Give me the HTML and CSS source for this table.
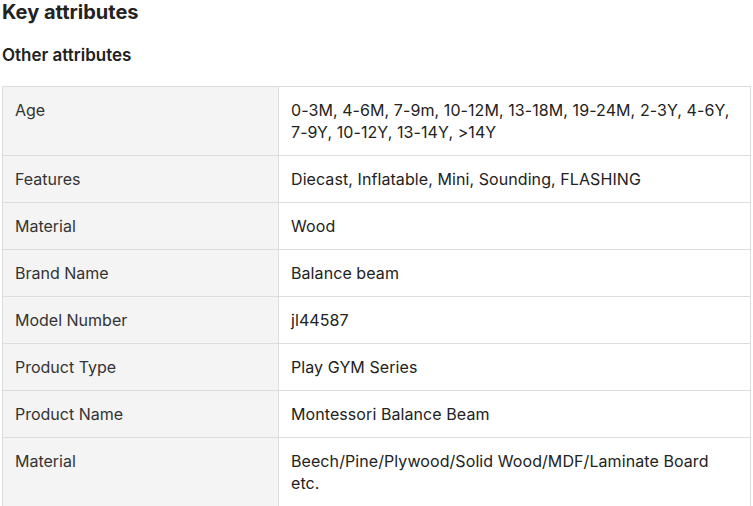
FILE: index.html
```html
<!DOCTYPE html>
<html>
<head>
<meta charset="utf-8">
<link rel="stylesheet" href="styles.css">
</head>
<body>
<div class="attrs">
  <h2 class="title">Key attributes</h2>
  <h3 class="subtitle">Other attributes</h3>
  <table class="table">
    <tr><td class="label">Age</td><td class="value">0-3M, 4-6M, 7-9m, 10-12M, 13-18M, 19-24M, 2-3Y, 4-6Y, 7-9Y, 10-12Y, 13-14Y, &gt;14Y</td></tr>
    <tr><td class="label">Features</td><td class="value">Diecast, Inflatable, Mini, Sounding, FLASHING</td></tr>
    <tr><td class="label">Material</td><td class="value">Wood</td></tr>
    <tr><td class="label">Brand Name</td><td class="value">Balance beam</td></tr>
    <tr><td class="label">Model Number</td><td class="value">jl44587</td></tr>
    <tr><td class="label">Product Type</td><td class="value">Play GYM Series</td></tr>
    <tr><td class="label">Product Name</td><td class="value">Montessori Balance Beam</td></tr>
    <tr><td class="label">Material</td><td class="value">Beech/Pine/Plywood/Solid Wood/MDF/Laminate Board etc.</td></tr>
  </table>
</div>
</body>
</html>
```
FILE: styles.css
```css
html, body {
  margin: 0;
  padding: 0;
  background: #fff;
}
body {
  font-family: Inter, "Noto Sans", sans-serif;
  color: #222;
}
.attrs {
  padding: 0 2px;
}
.title {
  margin: 0;
  font-size: 20px;
  line-height: 24px;
  font-weight: 700;
}
.subtitle {
  margin: 20px 0 0;
  font-size: 17px;
  line-height: 22px;
  font-weight: 600;
}
.table {
  margin-top: 20px;
  width: 749px;
  border-collapse: collapse;
  font-size: 16px;
  line-height: 22px;
}
.table td {
  border: 1px solid #ddd;
  padding: 12px;
  vertical-align: top;
}
.label {
  width: 251px;
  background: #f4f4f4;
  color: #333;
}
.value {
  color: #222;
  padding-left: 14px;
  letter-spacing: 0.08px;
}
```
